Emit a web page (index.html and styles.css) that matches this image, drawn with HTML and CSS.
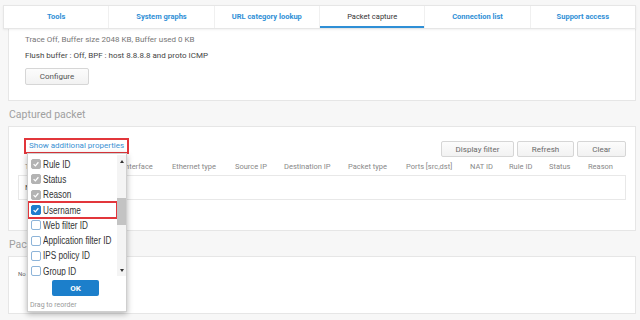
FILE: index.html
```html
<!DOCTYPE html>
<html lang="en">
<head>
  <meta charset="UTF-8" />
  <title>Diagnostics - Packet capture</title>
  <link rel="stylesheet" href="styles.css">
</head>
<body>

  <div class="tabs">
    <div class="tab">Tools</div>
    <div class="tab">System graphs</div>
    <div class="tab">URL category lookup</div>
    <div class="tab active">Packet capture</div>
    <div class="tab">Connection list</div>
    <div class="tab">Support access</div>
  </div>

  <div class="panel status-panel">
    <p class="muted">Trace Off, Buffer size 2048 KB, Buffer used 0 KB</p>
    <p class="line2">Flush buffer : Off, BPF : host 8.8.8.8 and proto ICMP</p>
    <button class="btn configure">Configure</button>
  </div>

  <h2 class="section-title">Captured packet</h2>
  <div class="panel capture-panel">
    <div class="toolbar">
      <a class="props-link">Show additional properties</a>
      <div class="actions">
        <button class="btn w-filter">Display filter</button>
        <button class="btn w-refresh">Refresh</button>
        <button class="btn w-clear">Clear</button>
      </div>
    </div>
    <div class="grid-head">
      <span>Time</span>
      <span>Interface</span>
      <span>Ethernet type</span>
      <span>Source IP</span>
      <span>Destination IP</span>
      <span>Packet type</span>
      <span>Ports [src,dst]</span>
      <span>NAT ID</span>
      <span>Rule ID</span>
      <span>Status</span>
      <span>Reason</span>
    </div>
    <div class="grid-body">No records found</div>
  </div>

  <h2 class="section-title">Packet information</h2>
  <div class="panel info-panel">
    <span class="tiny">No packet selected</span>
  </div>

  <!-- column chooser popup -->
  <div class="props-menu">
    <div class="menu-body">
      <ul class="menu-list">
        <li><span class="cb cb-gray"><svg viewBox="0 0 10 10"><polyline points="2,5.2 4.2,7.3 8,2.8"/></svg></span><span class="lbl">Rule ID</span></li>
        <li><span class="cb cb-gray"><svg viewBox="0 0 10 10"><polyline points="2,5.2 4.2,7.3 8,2.8"/></svg></span><span class="lbl">Status</span></li>
        <li><span class="cb cb-gray"><svg viewBox="0 0 10 10"><polyline points="2,5.2 4.2,7.3 8,2.8"/></svg></span><span class="lbl">Reason</span></li>
        <li class="hl"><span class="cb cb-blue"><svg viewBox="0 0 10 10"><polyline points="2,5.2 4.2,7.3 8,2.8"/></svg></span><span class="lbl">Username</span></li>
        <li><span class="cb"></span><span class="lbl">Web filter ID</span></li>
        <li><span class="cb"></span><span class="lbl">Application filter ID</span></li>
        <li><span class="cb"></span><span class="lbl">IPS policy ID</span></li>
        <li><span class="cb"></span><span class="lbl">Group ID</span></li>
      </ul>
      <div class="scrollbar">
        <div class="arrow up"></div>
        <div class="track"><div class="thumb"></div></div>
        <div class="arrow down"></div>
      </div>
    </div>
    <button class="ok-btn">OK</button>
    <div class="hint">Drag to reorder</div>
  </div>

</body>
</html>
```

FILE: styles.css
```css
body {
  margin: 0;
  padding: 5px 4px 0 3px;
  background: #f7f7f7;
  font-family: Roboto, "Liberation Sans", sans-serif;
  color: #444;
}
.tabs {
  display: flex;
  height: 22px;
  background: #fff;
  border: 1px solid #e6e6e6;
  box-shadow: 0 1px 2px rgba(0,0,0,0.06);
  position: relative;
  z-index: 1;
}
.tab {
  flex: 1;
  text-align: center;
  line-height: 22px;
  font-size: 7.5px;
  font-weight: bold;
  color: #2f8fd6;
  border-right: 1px solid #f0f0f0;
}
.tab:last-child {
  border-right: none;
}
.tab.active {
  color: #333;
  font-weight: normal;
  box-shadow: inset 0 -2px 0 #2f8fd6;
}
.panel {
  background: #fff;
  border: 1px solid #e6e6e6;
  margin-left: 5px;
  box-sizing: border-box;
}
.status-panel {
  border-top: none;
  height: 72px;
  padding: 5px 16px 0;
}
.status-panel p {
  margin: 0;
  font-size: 8px;
  line-height: 12px;
  color: #444;
}
.status-panel p.muted {
  color: #777;
}
.status-panel p.line2 {
  margin-top: 4px;
}
.btn {
  background: linear-gradient(#fcfcfc, #f2f2f2);
  border: 1px solid #d6d6d6;
  border-radius: 2px;
  font-family: Roboto, "Liberation Sans", sans-serif;
  font-size: 8px;
  color: #6a6a6a;
  height: 16px;
  padding: 0;
  box-sizing: border-box;
}
.configure {
  margin-top: 6px;
  width: 64px;
  height: 17px;
  color: #555;
}
.section-title {
  margin: 0 0 0 6px;
  height: 25px;
  box-sizing: border-box;
  padding-top: 6px;
  line-height: 16px;
  font-size: 10.5px;
  font-weight: normal;
  color: #a0a0a0;
}
.capture-panel {
  height: 105px;
  padding: 11px 9px 0;
}
.toolbar {
  display: flex;
  justify-content: space-between;
  height: 19px;
}
.props-link {
  margin-left: 6px;
  height: 16px;
  box-sizing: border-box;
  border: 2px solid #e2363b;
  padding: 0 3px;
  font-size: 8px;
  line-height: 12px;
  color: #3a90d2;
}
.actions {
  display: flex;
  gap: 3px;
  margin-top: 3px;
}
.w-filter { width: 73px; }
.w-refresh { width: 57px; }
.w-clear { width: 49px; }
.grid-head {
  display: grid;
  grid-template-columns: 98px 49px 63px 49px 64px 58px 64px 39px 40px 39px 1fr;
  margin-top: 2px;
  padding-left: 7px;
  height: 16px;
  line-height: 16px;
  font-size: 7.5px;
  color: #888;
  white-space: nowrap;
}
.grid-body {
  height: 25px;
  box-sizing: border-box;
  border: 1px solid #e8e8e8;
  padding-left: 6px;
  line-height: 23px;
  font-size: 8px;
  color: #555;
}
.info-panel {
  height: 58px;
  padding: 10px 9px 0;
  line-height: 7px;
}
.tiny {
  font-size: 6px;
  color: #666;
}

/* column chooser popup */
.props-menu {
  position: absolute;
  left: 27px;
  top: 153px;
  width: 100px;
  height: 159px;
  box-sizing: border-box;
  background: #fff;
  border: 1px solid #cfcfcf;
  box-shadow: 0 2px 6px rgba(0,0,0,0.3);
  z-index: 5;
}
.menu-body {
  display: flex;
  height: 121px;
  margin-top: 1px;
}
.menu-list {
  list-style: none;
  margin: 0;
  padding: 1.5px 0 0;
  flex: 1;
  overflow: hidden;
}
.menu-list li {
  display: flex;
  align-items: center;
  height: 15.3px;
  padding-left: 3px;
  gap: 2px;
  font-family: "Liberation Sans", sans-serif;
  font-size: 10px;
  color: #333;
  white-space: nowrap;
}
.lbl {
  display: inline-block;
  transform: scaleX(0.82);
  transform-origin: left center;
}
.menu-list li.hl {
  outline: 2px solid #e2363b;
  outline-offset: -1px;
}
.cb {
  width: 10px;
  height: 10px;
  box-sizing: border-box;
  border: 1px solid #8db4d9;
  border-radius: 2px;
  background: #fff;
  flex-shrink: 0;
  display: flex;
}
.cb svg {
  width: 100%;
  height: 100%;
  fill: none;
  stroke: #fff;
  stroke-width: 1.6;
}
.cb-gray {
  background: #b3b3b3;
  border-color: #b3b3b3;
}
.cb-blue {
  background: #1f7dcd;
  border-color: #1f7dcd;
}
.scrollbar {
  width: 9px;
  display: flex;
  flex-direction: column;
  background: #f4f4f4;
}
.arrow {
  height: 12px;
  display: flex;
  align-items: center;
  justify-content: center;
}
.arrow.up::before {
  content: "";
  border-left: 2.5px solid transparent;
  border-right: 2.5px solid transparent;
  border-bottom: 3px solid #333;
}
.arrow.down::before {
  content: "";
  border-left: 2.5px solid transparent;
  border-right: 2.5px solid transparent;
  border-top: 3px solid #333;
}
.track {
  flex: 1;
}
.thumb {
  margin-top: 31px;
  height: 27px;
  background: #c3c3c3;
}
.ok-btn {
  display: block;
  margin: 4px 0 0 24px;
  width: 47px;
  height: 16px;
  border: none;
  border-radius: 2px;
  background: #1c7fcb;
  color: #fff;
  font-family: Roboto, "Liberation Sans", sans-serif;
  font-size: 8px;
  font-weight: bold;
  padding: 0;
}
.hint {
  margin-top: 4px;
  padding-left: 2px;
  font-size: 7px;
  line-height: 10px;
  color: #9a9a9a;
}
```
